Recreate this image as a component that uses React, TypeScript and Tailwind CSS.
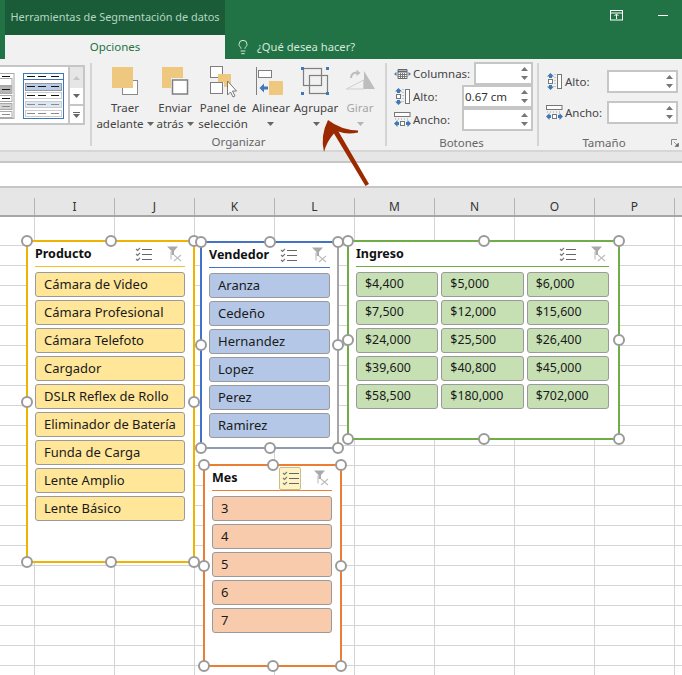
// App.tsx
// Cinta de Excel con segmentaciones de datos sobre la hoja.

import { Lightbulb } from "lucide-react";
import type { ReactNode } from "react";

const COLUMNS = ["I", "J", "K", "L", "M", "N", "O", "P"];
const PRODUCTOS = [
  "Cámara de Video",
  "Cámara Profesional",
  "Cámara Telefoto",
  "Cargador",
  "DSLR Reflex de Rollo",
  "Eliminador de Batería",
  "Funda de Carga",
  "Lente Amplio",
  "Lente Básico",
];
const VENDEDORES = ["Aranza", "Cedeño", "Hernandez", "Lopez", "Perez", "Ramirez"];
const MESES = ["3", "4", "5", "6", "7"];
const INGRESOS = [
  "$4,400", "$5,000", "$6,000",
  "$7,500", "$12,000", "$15,600",
  "$24,000", "$25,500", "$26,400",
  "$39,600", "$40,800", "$45,000",
  "$58,500", "$180,000", "$702,000",
];

const YELLOW = "#edc87e";

function Caret({ muted }: { muted?: boolean }) {
  return (
    <svg width="7" height="4" viewBox="0 0 7 4" className="inline-block">
      <path d="M0 0h7L3.5 4z" fill={muted ? "#b5b5b5" : "#666"} />
    </svg>
  );
}

function RibbonIcon({ children }: { children: ReactNode }) {
  return (
    <svg width="32" height="34" viewBox="0 0 32 34">
      {children}
    </svg>
  );
}

function TraerIcon() {
  return (
    <RibbonIcon>
      <rect x="13.500" y="16.500" width="15" height="14" fill="#fff" stroke="#8a8a8a" />
      <rect x="3" y="3" width="21" height="21" fill={YELLOW} />
    </RibbonIcon>
  );
}

function EnviarIcon() {
  return (
    <RibbonIcon>
      <rect x="3" y="3" width="21" height="21" fill={YELLOW} />
      <rect x="12" y="14" width="18" height="17" fill="#f1f1f1" />
      <rect x="13.500" y="16" width="15" height="14" fill="#fff" stroke="#7f7f7f" strokeWidth="1.5" />
    </RibbonIcon>
  );
}

function PanelIcon() {
  return (
    <RibbonIcon>
      <rect x="3.500" y="2.500" width="12" height="11" fill="#fff" stroke="#7f7f7f" />
      <rect x="3.500" y="18.500" width="12" height="11" fill="#fff" stroke="#7f7f7f" />
      <path d="M11 10h13v13h-7v-5h-6z" fill={YELLOW} />
      <path d="M20.500 17v14l3-3 2.500 5 2-1-2.500-5h4z" fill="#fff" stroke="#777" />
    </RibbonIcon>
  );
}

function AlinearIcon() {
  return (
    <RibbonIcon>
      <path d="M1.500 3v28" stroke="#7f7f7f" />
      <rect x="3.500" y="6.500" width="13" height="7" fill="#fff" stroke="#7f7f7f" />
      <rect x="14" y="17" width="14" height="14" fill={YELLOW} />
      <path d="M9 19.500 4.500 24 9 28.500v-3h4v-3H9z" fill="#3f78b6" />
    </RibbonIcon>
  );
}

function AgruparIcon() {
  return (
    <RibbonIcon>
      <rect x="3.500" y="4.500" width="18" height="17" fill="none" stroke="#7f7f7f" strokeWidth="1.200" />
      <rect x="9.500" y="11.500" width="18" height="18" fill="none" stroke="#7f7f7f" strokeWidth="1.200" />
      <rect x="1" y="3" width="3" height="3" fill="#3f78b6" />
      <rect x="26" y="3" width="3" height="3" fill="#3f78b6" />
      <rect x="1" y="28" width="3" height="3" fill="#3f78b6" />
      <rect x="26" y="28" width="3" height="3" fill="#3f78b6" />
    </RibbonIcon>
  );
}

function GirarIcon() {
  return (
    <RibbonIcon>
      <path d="M20 7 31 25H20z" fill="#bdbdbd" />
      <path d="M2.500 25 19.500 16v9z" fill="none" stroke="#cfcfcf" />
      <path d="M7 14c0-4 3-6 7-5" fill="none" stroke="#bdbdbd" strokeWidth="2" />
      <path d="m12.500 5.500 4 3.500-4 3z" fill="#bdbdbd" />
    </RibbonIcon>
  );
}

function ColumnasIcon() {
  return (
    <svg width="17" height="12" viewBox="0 0 17 12">
      <path d="M4 1.500h9v9H4z" fill="#fff" stroke="#666" />
      <path d="M4 3.500h9" stroke="#666" strokeWidth="2" />
      <path d="M6.500 5v5M8.500 5v5M10.500 5v5M4 6.500h9M4 8.500h9" stroke="#777" />
      <path d="M2.500 4 0 6l2.500 2zM14.500 4 17 6l-2.500 2z" fill="#3f78b6" />
    </svg>
  );
}

function AltoIcon() {
  return (
    <svg width="17" height="17" viewBox="0 0 17 17">
      <rect x="11.500" y="1.500" width="4" height="14" fill="#fff" stroke="#777" />
      <rect x="2.500" y="6.500" width="4" height="4" fill="#fff" stroke="#777" />
      <path d="M4.500 0 1 3.500h2V5h3V3.500h2zM4.500 17 1 13.500h2V12h3v1.500h2z" fill="#3f78b6" />
      <path d="M9 1v15" stroke="#999" strokeDasharray="1 2" />
    </svg>
  );
}

function AnchoIcon() {
  return (
    <svg width="17" height="17" viewBox="0 0 17 17">
      <rect x="0.500" y="1.500" width="15.500" height="4" fill="#fff" stroke="#777" />
      <rect x="6.500" y="10.500" width="4" height="4" fill="#fff" stroke="#777" />
      <path d="M0 12.500 3.500 9v2H5v3H3.500v2zM17 12.500 13.500 9v2H12v3h1.500v2z" fill="#3f78b6" />
      <path d="M1 8h15" stroke="#999" strokeDasharray="1 2" />
    </svg>
  );
}

function RibbonButton({ width, icon, lines, muted }: {
  width: string;
  icon: ReactNode;
  lines: ReactNode[];
  muted?: boolean;
}) {
  return (
    <div className={`flex flex-col items-center pt-[5px] ${width} ${muted ? "text-[#a6a6a6]" : "text-[#444]"}`}>
      {icon}
      <div className="mt-[2px] flex flex-col items-center text-[11.5px] leading-[16px] whitespace-nowrap">
        {lines.map((line, i) => (
          <span key={i} className="flex h-[16px] items-center gap-[3px]">{line}</span>
        ))}
      </div>
    </div>
  );
}

function SpinInput({ value, width }: { value?: string; width: string }) {
  return (
    <div className={`flex h-[23px] items-center justify-between border-2 border-[#c6c6c6] bg-white pl-[1px] pr-[3px] text-[11.5px] text-[#333] ${width}`}>
      <span>{value}</span>
      <span className="flex flex-col gap-[5px]">
        <svg width="7" height="4" viewBox="0 0 7 4"><path d="M0 4h7L3.500 0z" fill="#777" /></svg>
        <svg width="7" height="4" viewBox="0 0 7 4"><path d="M0 0h7L3.500 4z" fill="#777" /></svg>
      </span>
    </div>
  );
}

function GalleryPreview() {
  return (
    <svg width="68" height="58" viewBox="0 0 68 58">
      <g stroke="#a9a9a9" fill="#fff">
        <rect x="-6" y="6.500" width="20" height="45" />
        <rect x="-4" y="11.500" width="16" height="7" fill="#fff" />
        <rect x="-4" y="19.500" width="16" height="7" fill="#b5b5b5" />
        <rect x="-4" y="28.500" width="16" height="6" fill="#fff" />
        <rect x="-4" y="36.500" width="16" height="6" fill="#d4d4d4" />
        <rect x="-4" y="44.500" width="16" height="6" fill="#fff" />
      </g>
      <rect x="23.500" y="6.500" width="40" height="45" fill="#fff" stroke="#3f78b6" />
      <path d="M23.500 12.500h40" stroke="#3f78b6" />
      <rect x="25.500" y="16.500" width="36" height="7" fill="#b9cde8" stroke="#999" />
      <rect x="25.500" y="25.500" width="36" height="6" fill="#fff" stroke="#ccc" />
      <rect x="25.500" y="34.500" width="36" height="6" fill="#dce7f5" stroke="#ccc" />
      <rect x="25.500" y="43.500" width="36" height="6" fill="#fff" stroke="#ccc" />
      <path d="M27 9.500h8M38 9.500h8M51 9.500h8M27 19.500h8M38 19.500h8M51 19.500h8M27 28.500h8M38 28.500h8M51 28.500h8" stroke="#111" />
      <path d="M27 37.500h8M38 37.500h8M51 37.500h8M27 46.500h8M38 46.500h8M51 46.500h8" stroke="#8a8a8a" />
      <path d="M2 9.500h8M2 22.500h8M2 31.500h8" stroke="#111" />
      <path d="M2 39.500h8M2 47.500h8" stroke="#8a8a8a" />
    </svg>
  );
}

function Gallery() {
  return (
    <div className="mt-[6px] flex h-[60px] w-[85px] border-2 border-l-0 border-[#c6c6c6] bg-white">
      <div className="w-[68px] overflow-hidden"><GalleryPreview /></div>
      <div className="flex w-[15px] flex-col border-l-2 border-[#c6c6c6]">
        <div className="flex h-[21px] items-center justify-center bg-[#e6e6e6]">
          <svg width="7" height="4" viewBox="0 0 7 4"><path d="M0 4h7L3.500 0z" fill="#c6c6c6" /></svg>
        </div>
        <div className="flex h-[18px] items-center justify-center border-b-2 border-[#c6c6c6]"><Caret /></div>
        <div className="flex flex-1 flex-col items-center justify-center gap-[1px]">
          <div className="h-px w-[7px] bg-[#666]" />
          <Caret />
        </div>
      </div>
    </div>
  );
}

function Ribbon() {
  return (
    <div className="flex h-[93px] border-b-2 border-[#d6d6d6] bg-[#f1f1f1] font-['Noto_Sans',sans-serif]">
      <div className="mb-[4px] mt-[4px] w-[92px] shrink-0 border-r-2 border-[#d4d4d4]">
        <div className="-mt-[4px]"><Gallery /></div>
      </div>

      <div className="mb-[4px] mt-[4px] flex w-[295px] shrink-0 flex-col border-r-2 border-[#d4d4d4]">
        <div className="-mt-[4px] flex h-[76px] pl-[5px]">
          <RibbonButton width="w-[56px]" icon={<TraerIcon />} lines={["Traer", <>adelante <Caret /></>]} />
          <RibbonButton width="w-[44px]" icon={<EnviarIcon />} lines={["Enviar", <>atrás <Caret /></>]} />
          <RibbonButton width="w-[52px]" icon={<PanelIcon />} lines={["Panel de", "selección"]} />
          <RibbonButton width="w-[44px]" icon={<AlinearIcon />} lines={["Alinear", <Caret />]} />
          <RibbonButton width="w-[46px]" icon={<AgruparIcon />} lines={["Agrupar", <Caret />]} />
          <RibbonButton width="w-[42px]" icon={<GirarIcon />} lines={["Girar", <Caret muted />]} muted />
        </div>
        <div className="mt-[2px] text-center text-[11.5px] leading-[16px] text-[#666]">Organizar</div>
      </div>

      <div className="mb-[4px] mt-[4px] flex w-[152px] shrink-0 flex-col border-r-2 border-[#d4d4d4] pr-[4px] pl-[7px] text-[11.5px] text-[#444]">
        <div className="-mt-[1px] flex h-[23px] items-center">
          <span className="flex w-[19px]"><ColumnasIcon /></span>
          <span>Columnas:</span>
          <span className="ml-auto"><SpinInput width="w-[59px]" /></span>
        </div>
        <div className="flex h-[23px] items-center">
          <span className="flex w-[19px]"><AltoIcon /></span>
          <span>Alto:</span>
          <span className="ml-auto"><SpinInput width="w-[71px]" value="0.67 cm" /></span>
        </div>
        <div className="flex h-[23px] items-center">
          <span className="flex w-[19px]"><AnchoIcon /></span>
          <span>Ancho:</span>
          <span className="ml-auto"><SpinInput width="w-[71px]" /></span>
        </div>
        <div className="mt-[4px] pr-[4px] text-center leading-[16px] text-[#666]">Botones</div>
      </div>

      <div className="relative flex flex-1 flex-col pl-[7px] pr-[4px] pt-[11px] text-[11.5px] text-[#444]">
        <div className="flex h-[23px] items-center">
          <span className="flex w-[19px]"><AltoIcon /></span>
          <span>Alto:</span>
          <span className="ml-auto"><SpinInput width="w-[71px]" /></span>
        </div>
        <div className="mt-[8px] flex h-[23px] items-center">
          <span className="flex w-[19px]"><AnchoIcon /></span>
          <span>Ancho:</span>
          <span className="ml-auto"><SpinInput width="w-[71px]" /></span>
        </div>
        <div className="mt-[11px] pr-[16px] text-center leading-[16px] text-[#666]">Tamaño</div>
        <svg width="8" height="8" viewBox="0 0 8 8" className="absolute bottom-[3px] right-[3px]">
          <path d="M.5 6V.5H6" fill="none" stroke="#888" />
          <path d="M3 3l3.500 3.500M7.500 4v3.500H4z" stroke="#666" fill="#666" strokeWidth=".6" />
        </svg>
      </div>
    </div>
  );
}

function TitleBar() {
  return (
    <div className="h-[59px] shrink-0 bg-[#217346] font-['Noto_Sans',sans-serif]">
      <div className="flex h-[35px]">
        <div className="ml-[5px] flex w-[220px] items-center justify-center whitespace-nowrap bg-[#1a5c38] text-[10.9px] text-[#b6d5c2]">
          Herramientas de Segmentación de datos
        </div>
        <div className="ml-auto flex items-start">
          <svg width="14" height="11" viewBox="0 0 14 11" className="mr-[34px] mt-[10px]">
            <rect x=".5" y=".5" width="12" height="9.500" fill="none" stroke="#fff" />
            <path d="M1 3h11M6.500 9V4.500M4.500 6l2-2 2 2" fill="none" stroke="#fff" />
          </svg>
          <div className="mr-[14px] mt-[15px] h-px w-[10px] bg-white" />
        </div>
      </div>
      <div className="flex h-[24px] items-center">
        <div className="ml-[5px] flex h-full w-[220px] items-center justify-center bg-[#f1f1f1] text-[11.5px] text-[#217346]">
          Opciones
        </div>
        <Lightbulb size={16} strokeWidth={1.4} className="ml-[10px] text-[#e3efe8]" />
        <span className="ml-[6px] text-[11.200px] text-[#d5e8db]">¿Qué desea hacer?</span>
      </div>
    </div>
  );
}

function Sheet() {
  return (
    <div className="relative flex-1 overflow-hidden bg-white">
      <div className="flex h-[29px] border-b-2 border-[#a6a6a6] bg-[#e6e6e6] pl-[34px] pt-[10px] font-['Noto_Sans',sans-serif] text-[12px] text-[#333]">
        {COLUMNS.map((col) => (
          <div key={col} className="flex w-[80px] shrink-0 items-center justify-center border-l border-[#b4b4b4]">
            {col}
          </div>
        ))}
        <div className="flex-1 border-l border-[#b4b4b4]" />
      </div>
      <div className="flex flex-col">
        {Array.from({ length: 23 }).map((_, row) => (
          <div key={row} className={`flex border-b border-[#d4d4d4] ${row === 0 ? "h-[29px]" : "h-[20px]"}`}>
            <div className="w-[34px] shrink-0" />
            {COLUMNS.map((col) => (
              <div key={col} className="w-[80px] shrink-0 border-l border-[#d4d4d4]" />
            ))}
            <div className="flex-1 border-l border-[#d4d4d4]" />
          </div>
        ))}
      </div>
    </div>
  );
}

function MultiSelectIcon() {
  return (
    <svg width="17" height="15" viewBox="0 0 17 15">
      <path d="M1 2l1.500 1.500L5 1M1 7l1.500 1.500L5 6M1 12l1.500 1.500L5 11" fill="none" stroke="#777" strokeWidth="1.100" />
      <path d="M7 2.500h10M7 7.500h10M7 12.500h10" stroke="#666" />
    </svg>
  );
}

function ClearFilterIcon() {
  return (
    <svg width="16" height="16" viewBox="0 0 16 16">
      <path d="M0 0.500h11L7 5v4H4.500V5z" fill="#a9a9a9" />
      <path d="M4 5.500v8M7 9l7 6M14 9l-7 6" stroke="#bdbdbd" strokeWidth="1.100" fill="none" />
    </svg>
  );
}

function Handle({ place }: { place: string }) {
  return <span className={`absolute h-[12px] w-[12px] rounded-full border-[2px] border-[#9a9a9a] bg-white ${place}`} />;
}

function Slicer({ title, items, position, border, line, fill, columns, active, headerGap, itemText }: {
  title: string;
  items: string[];
  position: string;
  border: string;
  line: string;
  fill: string;
  columns?: string;
  active?: boolean;
  headerGap: string;
  itemText: string;
}) {
  return (
    <div className={`absolute box-border border-2 bg-white pl-[7px] font-['Noto_Sans',sans-serif] ${position} ${border}`}>
      <div className={`flex h-[25px] items-center border-b ${line}`}>
        <span className="pt-[1px] text-[12.5px] font-bold text-[#111]">{title}</span>
        <span className={`ml-auto flex pr-[2px] ${headerGap} items-center`}>
          {active ? (
            <span className="flex h-[23px] w-[22px] items-center justify-center rounded-[2px] border border-[#c9bd8a] bg-[#fdf3c4]">
              <MultiSelectIcon />
            </span>
          ) : (
            <MultiSelectIcon />
          )}
          <ClearFilterIcon />
        </span>
      </div>
      <div className={`mt-[5px] grid gap-[3px] ${columns ?? "grid-cols-1"}`}>
        {items.map((item) => (
          <div key={item} className={`flex h-[25px] items-center rounded-[3px] border border-[#9a9a9a] pl-[8px] whitespace-nowrap text-[#1a1a1a] ${itemText} ${fill}`}>
            {item}
          </div>
        ))}
      </div>
      <Handle place="-left-[7px] -top-[7px]" />
      <Handle place="left-1/2 -top-[7px] -translate-x-1/2" />
      <Handle place="-right-[7px] -top-[7px]" />
      <Handle place="-left-[7px] top-1/2 -translate-y-1/2" />
      <Handle place="-right-[7px] top-1/2 -translate-y-1/2" />
      <Handle place="-left-[7px] -bottom-[7px]" />
      <Handle place="left-1/2 -bottom-[7px] -translate-x-1/2" />
      <Handle place="-right-[7px] -bottom-[7px]" />
    </div>
  );
}

export default function App() {
  return (
    <div className="relative flex h-[675px] w-[682px] flex-col overflow-hidden bg-white">
      <TitleBar />
      <Ribbon />
      <div className="h-[11px] shrink-0 border-b-2 border-[#c6c6c6] bg-[#e6e6e6]" />
      <div className="h-[25px] shrink-0 border-b-2 border-[#c6c6c6] bg-white" />
      <Sheet />

      <Slicer
        title="Producto"
        items={PRODUCTOS}
        position="left-[26px] top-[240px] h-[323px] w-[169px] pr-[8px]"
        border="border-[#f0b400]"
        line="border-[#f5c21a]"
        fill="bg-[#ffe699]"
        headerGap="gap-[15px]"
        itemText="text-[13px]"
      />
      <Slicer
        title="Vendedor"
        items={VENDEDORES}
        position="left-[200px] top-[241px] h-[208px] w-[139px] pr-[7px]"
        border="border-[#4472c4] border-r-[#a6a6a6] border-b-[#8f9bb0]"
        line="border-[#4472c4]"
        fill="bg-[#b4c7e7]"
        headerGap="gap-[15px]"
        itemText="text-[13px]"
      />
      <Slicer
        title="Ingreso"
        items={INGRESOS}
        position="left-[347px] top-[240px] h-[200px] w-[273px] pr-[9px]"
        border="border-[#70ad47]"
        line="border-[#70ad47]"
        fill="bg-[#c6e0b4]"
        columns="grid-cols-3"
        headerGap="gap-[15px]"
        itemText="text-[12.400px]"
      />
      <Slicer
        title="Mes"
        items={MESES}
        position="left-[203px] top-[464px] h-[203px] w-[139px] pr-[8px]"
        border="border-[#ed7d31]"
        line="border-[#ed7d31]"
        fill="bg-[#f8cbad]"
        active
        headerGap="gap-[13px]"
        itemText="text-[13px]"
      />

      <svg width="60" height="75" viewBox="320 115 60 75" className="absolute left-[320px] top-[115px]">
        <path
          d="M328 120Q341 130 358 130.500L358 132.500Q347 135 338.500 131.500L369 184 365.500 186 334 133.500Q327 141 324 152Q320 136 328 120z"
          fill="#9c2a00"
        />
      </svg>
    </div>
  );
}
